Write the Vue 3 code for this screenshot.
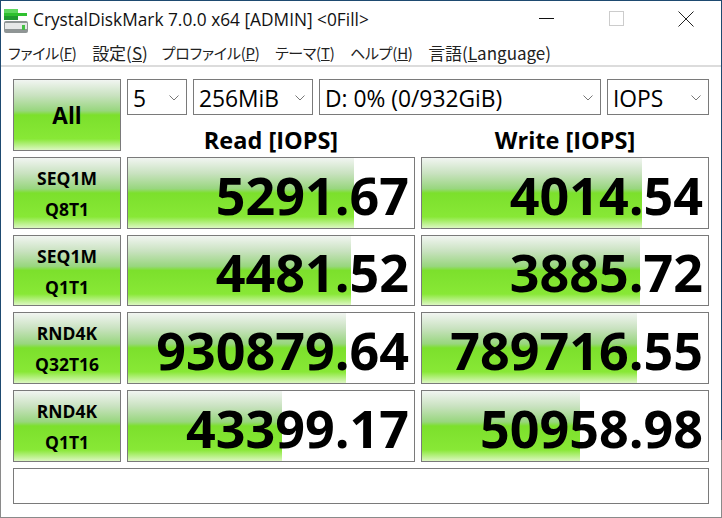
<script setup>
const menus = [
  { t: 'ファイル(', k: 'F', e: ')', c: 'kana' },
  { t: '設定(', k: 'S', e: ')', c: 'kanji' },
  { t: 'プロファイル(', k: 'P', e: ')', c: 'kana' },
  { t: 'テーマ(', k: 'T', e: ')', c: 'kana' },
  { t: 'ヘルプ(', k: 'H', e: ')', c: 'kana' },
  { t: '言語(', k: 'L', e: 'anguage)', c: 'kanji' }
]
const rows = [
  { a: 'SEQ1M', b: 'Q8T1', r: '5291.67', rw: 226, w: '4014.54', ww: 220 },
  { a: 'SEQ1M', b: 'Q1T1', r: '4481.52', rw: 223, w: '3885.72', ww: 218 },
  { a: 'RND4K', b: 'Q32T16', r: '930879.64', rw: 218, w: '789716.55', ww: 215 },
  { a: 'RND4K', b: 'Q1T1', r: '43399.17', rw: 154, w: '50958.98', ww: 158 }
]
</script>

<template>
  <div class="window">
    <header class="titlebar">
      <svg class="appicon" width="26" height="26" viewBox="0 0 26 26">
        <rect x="0" y="0" width="14" height="4" fill="#5fd85f" />
        <rect x="0" y="4" width="23" height="3" fill="#2fc02f" />
        <rect x="0" y="7" width="14" height="4" fill="#1f9a2f" />
        <rect x="0" y="12" width="24" height="12" rx="2" fill="#8f9595" />
        <rect x="1" y="14" width="22" height="6" fill="#e6e8e8" />
        <rect x="18" y="16" width="3" height="5" fill="#46c046" />
      </svg>
      <span class="title">CrystalDiskMark 7.0.0 x64 [ADMIN] &lt;0Fill&gt;</span>
      <div class="controls">
        <span class="ctl"><i class="min"></i></span>
        <span class="ctl"><i class="max"></i></span>
        <span class="ctl">
          <svg width="16" height="16" viewBox="0 0 16 16"><path d="M.5.5l15 15M15.500.5l-15 15" stroke="#222" fill="none" /></svg>
        </span>
      </div>
    </header>
    <nav class="menubar">
      <span v-for="m in menus" :key="m.k" :class="['menu', m.c]">{{ m.t }}<u>{{ m.k }}</u>{{ m.e }}</span>
    </nav>
    <main class="panel">
      <div class="grid">
        <button class="all green">All</button>
        <div class="head">
          <div class="selects">
            <div class="sel s1"><span>5</span><svg class="chev" width="10" height="6" viewBox="0 0 10 6"><path d="M.5.5L5 5 9.500.5" fill="none" stroke="#777" /></svg></div>
            <div class="sel s2"><span>256MiB</span><svg class="chev" width="10" height="6" viewBox="0 0 10 6"><path d="M.5.5L5 5 9.500.5" fill="none" stroke="#777" /></svg></div>
            <div class="sel s3"><span>D: 0% (0/932GiB)</span><svg class="chev" width="10" height="6" viewBox="0 0 10 6"><path d="M.5.5L5 5 9.500.5" fill="none" stroke="#777" /></svg></div>
            <div class="sel s4"><span>IOPS</span><svg class="chev" width="10" height="6" viewBox="0 0 10 6"><path d="M.5.5L5 5 9.500.5" fill="none" stroke="#777" /></svg></div>
          </div>
          <div class="labels">
            <div>Read [IOPS]</div>
            <div>Write [IOPS]</div>
          </div>
        </div>
        <template v-for="row in rows" :key="row.b + row.r">
          <button class="rowbtn green"><span>{{ row.a }}</span><span>{{ row.b }}</span></button>
          <div class="cell">
            <div class="fill green" :style="{ width: row.rw + 'px' }"></div>
            <span class="num">{{ row.r }}</span>
          </div>
          <div class="cell">
            <div class="fill green" :style="{ width: row.ww + 'px' }"></div>
            <span class="num">{{ row.w }}</span>
          </div>
        </template>
      </div>
      <div class="message"></div>
    </main>
  </div>
</template>

<style>
html, body { margin: 0; background: #fff; }
</style>

<style scoped>
.window {
  width: 722px;
  height: 518px;
  box-sizing: border-box;
  border: 1px solid;
  border-image: linear-gradient(#1e4a70 0 85%, #8a8a8a 85%) 1;
  background: #fff;
  overflow: hidden;
  font-family: "Open Sans", "Noto Sans", "Noto Sans CJK JP", sans-serif;
  color: #000;
}
.titlebar {
  height: 38px;
  display: flex;
  align-items: center;
  padding-left: 3px;
}
.appicon { flex: none; margin-top: 4px; }
.title { font-size: 17.3px; margin-left: 3px; padding-bottom: 2px; color: #111; white-space: nowrap; }
.controls { margin-left: auto; display: flex; align-self: stretch; padding-bottom: 3px; }
.ctl { width: 70px; display: flex; align-items: center; justify-content: center; }
.min { display: block; width: 15px; height: 1px; background: #111; }
.max { display: block; box-sizing: border-box; width: 15px; height: 15px; border: 1px solid #ccc; }
.menubar {
  box-sizing: border-box;
  height: 28px;
  display: flex;
  align-items: center;
  padding-left: 7px;
  gap: 15.5px;
  font-family: "Noto Sans CJK JP", "Noto Sans", sans-serif;
  font-feature-settings: "palt";
  color: #222;
  border-bottom: 2px solid #dcdcdc;
  white-space: nowrap;
}
.kana { font-size: 15px; letter-spacing: -0.25px; }
.kanji { font-size: 17px; margin-right: -1.5px; }
.panel { padding: 12px 0 0 12px; }
.grid {
  display: grid;
  grid-template-columns: 108px 288px 288px;
  grid-template-rows: 72px 72px 71px 72px 72px;
  column-gap: 6px;
  row-gap: 6px;
}
.green {
  background: linear-gradient(to bottom, #f1f5f1 0%, #c9e2c0 22%, #98d67e 44%, #7ce02c 50%, #88e836 84%, #dcf7c2 100%);
}
.all, .rowbtn {
  box-sizing: border-box;
  border: 1px solid #7a7a7a;
  padding: 0;
  margin: 0;
  font-family: inherit;
  font-weight: 700;
  color: #000;
}
.all { font-size: 22.5px; }
.rowbtn {
  display: flex;
  flex-direction: column;
  align-items: center;
  justify-content: center;
  padding-top: 2px;
  font-size: 17.5px;
  line-height: 31px;
  font-weight: 700;
}
.head { grid-column: 2 / 4; display: flex; flex-direction: column; }
.selects { display: flex; gap: 6px; height: 36px; }
.sel {
  flex: none;
  box-sizing: border-box;
  height: 36px;
  border: 1px solid #7a7a7a;
  display: flex;
  align-items: center;
  justify-content: space-between;
  padding: 2px 7px 0 5px;
  font-size: 22.8px;
  white-space: nowrap;
}
.s1 { width: 60px; }
.s2 { width: 120px; }
.s3 { width: 282px; }
.s4 { width: 102px; }
.labels {
  flex: 1;
  display: grid;
  grid-template-columns: 288px 288px;
  column-gap: 6px;
  align-items: center;
  text-align: center;
  font-size: 23.5px;
  font-weight: 700;
  padding-top: 9px;
}
.cell {
  position: relative;
  box-sizing: border-box;
  border: 1px solid #7a7a7a;
  display: flex;
  justify-content: flex-end;
  align-items: center;
  overflow: hidden;
}
.fill { position: absolute; left: 0; top: 0; bottom: 0; }
.num {
  position: relative;
  font-size: 52px;
  font-weight: 700;
  line-height: 1;
  padding: 3px 5px 0 0;
}
.message {
  box-sizing: border-box;
  width: 696px;
  height: 36px;
  margin-top: 6px;
  border: 1px solid #7a7a7a;
}
</style>
